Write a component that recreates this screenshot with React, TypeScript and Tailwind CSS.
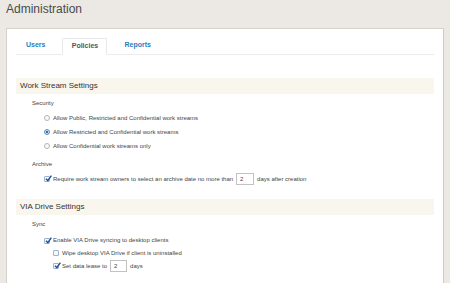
import React from 'react'

function Radio({ checked }: { checked?: boolean }) {
  return (
    <span
      className={
        'flex h-[6px] w-[6px] shrink-0 items-center justify-center rounded-full border ' +
        (checked ? 'border-[#5b8fc9] bg-[#cfe2f6]' : 'border-[#b5b5b5] bg-[#fafafa]')
      }
    >
      {checked && <span className="h-[2px] w-[2px] rounded-full bg-[#1d3f6e]" />}
    </span>
  )
}

function Check({ checked }: { checked?: boolean }) {
  return (
    <span className="relative flex h-[6px] w-[6px] shrink-0 items-center justify-center rounded-[1px] border border-[#9fb3cc] bg-[#f4f7fb]">
      {checked && (
        <svg className="absolute -top-[2px] left-[0px]" width="7" height="7" viewBox="0 0 7 7">
          <path d="M1 3.8 L2.8 5.6 L6.4 0.6" fill="none" stroke="#1f4f98" strokeWidth="1.4" />
        </svg>
      )}
    </span>
  )
}

function NumBox({ value, w }: { value: string; w: string }) {
  return (
    <span className={'mx-[3px] flex h-[12px] items-center border border-[#c2c2c2] bg-white pl-[3px] text-[6px] ' + w}>
      {value}
    </span>
  )
}

function SectionHead({ children }: { children: React.ReactNode }) {
  return (
    <div className="flex h-[16px] items-center bg-[#f9f6ee] pl-[4px] text-[8px] text-[#333]">{children}</div>
  )
}

export default function App() {
  return (
    <div className="h-[283px] w-[450px] overflow-hidden bg-[#ece9e4] font-['Liberation_Sans',Arial,sans-serif] text-[#444]">
      <div className="pl-[6px] pt-[2px] text-[12px] leading-[14px] text-[#4a4a4a]">Administration</div>

      <div className="ml-[6px] mt-[12px] h-[300px] w-[438px] border border-[#d6d2ca] border-r-[#d0ccc4] bg-white pl-[9px] pr-[9px]">
        {/* tabs */}
        <div className="flex h-[26px] items-end border-b border-[#ececec] text-[7px] font-bold">
          <div className="mb-[4px] ml-[10px] text-[#2a7cc0]">Users</div>
          <div className="-mb-px ml-[17px] flex h-[17px] w-[45px] items-center justify-center rounded-t-[2px] border border-b-white border-[#e8e8e8] bg-white text-[#555]">
            Policies
          </div>
          <div className="mb-[4px] ml-[17px] text-[#2a7cc0]">Reports</div>
        </div>

        <div className="mt-[23px]">
          <SectionHead>Work Stream Settings</SectionHead>
          <div className="text-[6px]">
            <div className="mt-[4px] flex h-[10px] items-center pl-[16px]">Security</div>
            <div className="mt-[3px] flex h-[14px] items-center gap-[3px] pl-[28px]">
              <Radio />
              <span>Allow Public, Restricted and Confidential work streams</span>
            </div>
            <div className="flex h-[14px] items-center gap-[3px] pl-[28px]">
              <Radio checked />
              <span>Allow Restricted and Confidential work streams</span>
            </div>
            <div className="flex h-[14px] items-center gap-[3px] pl-[28px]">
              <Radio />
              <span>Allow Confidential work streams only</span>
            </div>
            <div className="mt-[6px] flex h-[10px] items-center pl-[16px]">Archive</div>
            <div className="mt-[3px] flex h-[14px] items-center gap-[3px] pl-[28px]">
              <Check checked />
              <span className="flex items-center">
                Require work stream owners to select an archive date no more than
                <NumBox value="2" w="w-[18px]" />
                days after creation
              </span>
            </div>
          </div>
        </div>

        <div className="mt-[13px]">
          <SectionHead>VIA Drive Settings</SectionHead>
          <div className="text-[6px]">
            <div className="mt-[4px] flex h-[10px] items-center pl-[16px]">Sync</div>
            <div className="mt-[5px] flex h-[13px] items-center gap-[3px] pl-[28px]">
              <Check checked />
              <span>Enable VIA Drive syncing to desktop clients</span>
            </div>
            <div className="flex h-[12px] items-center gap-[3px] pl-[37px]">
              <Check />
              <span>Wipe desktop VIA Drive if client is uninstalled</span>
            </div>
            <div className="flex h-[14px] items-center gap-[3px] pl-[37px]">
              <Check checked />
              <span className="flex items-center">
                Set data lease to
                <NumBox value="2" w="w-[17px]" />
                days
              </span>
            </div>
          </div>
        </div>
      </div>
    </div>
  )
}
